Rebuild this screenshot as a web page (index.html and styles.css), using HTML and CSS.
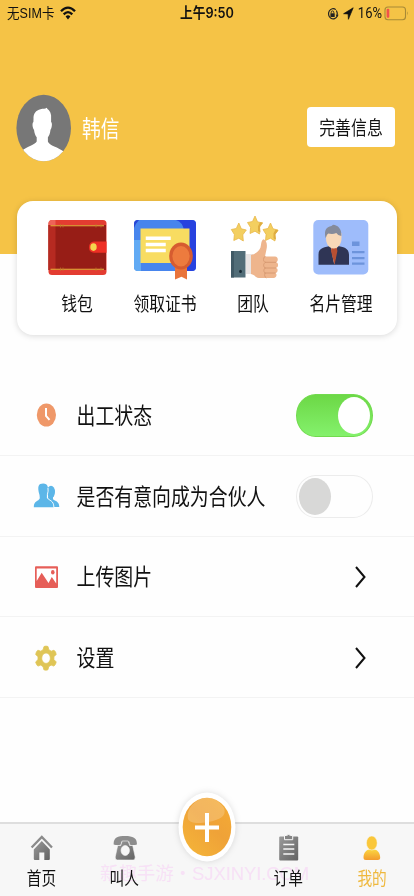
FILE: index.html
```html
<!DOCTYPE html>
<html lang="zh-CN">
<head>
<meta charset="utf-8">
<meta name="viewport" content="width=device-width, initial-scale=1">
<title>我的</title>
<link rel="stylesheet" href="styles.css">
</head>
<body>
<div class="app">
  <header class="hero">
    <div class="status">
      <div class="status-side"><span class="tall carrier">无SIM卡</span>
        <svg class="wifi" width="16" height="14" viewBox="0 0 16 14"><g fill="none" stroke="#111" stroke-width="2.3"><path d="M1 5.2Q8-2 15 5.2"/><path d="M3.7 8.4Q8 4 12.3 8.4"/></g><path d="M5.6 10.4Q8 8.3 10.4 10.4L8 13.5z" fill="#111"/></svg>
      </div>
      <span class="tall clock">上午9:50</span>
      <div class="status-side right">
        <svg width="12" height="14" viewBox="0 0 12 14"><path d="M8.8 2.6A4.6 5.1 0 1 0 10.3 9" fill="none" stroke="#222" stroke-width="1.2"/><path d="M9.4 3.5Q10.8 6 10.1 8.7" fill="none" stroke="#222" stroke-width="1.2"/><path d="M8.7 7.7h3L10.1 10z" fill="#222"/><rect x="3.4" y="6.3" width="4.3" height="3.7" fill="#222"/><path d="M4.2 6.4V5.3a1.3 1.4 0 0 1 2.6 0v1.1" fill="none" stroke="#222" stroke-width=".9"/></svg>
        <svg width="11" height="13" viewBox="0 0 11 13"><path d="M10.200.8L.6 6.700l4.500.2.3 5.400z" fill="#111" stroke="#111" stroke-width=".7" stroke-linejoin="round"/></svg>
        <span class="tall pct">16%</span>
        <svg class="battery" width="26" height="15" viewBox="0 0 26 15"><rect x="1" y="1" width="20.5" height="12.8" rx="3" fill="none" stroke="#a88a36" stroke-width="1.1"/><rect x="2.6" y="2.8" width="2.7" height="9" rx="1" fill="#f1534a"/><path d="M23 5.3q1.7 2.1 0 4.3z" fill="#a88a36"/></svg>
      </div>
    </div>
    <div class="profile">
      <svg width="56" height="68" viewBox="0 0 56 68"><defs><clipPath id="face"><ellipse cx="27.7" cy="34" rx="27.3" ry="33.2"/></clipPath></defs><g clip-path="url(#face)"><path fill="#777" d="M0 0h56v68H0z"/><path fill="#fff" d="M17.5 25c-.3-6 2.500-8.500 7-9.800 3-.9 4.500-.2 6.200-1.500 1 2 4 3 4.400 7.800V28c1.500 1 .8 6-.6 7.800-.5 4-1.400 6-2.600 7.400v4.200c1.500 4.500 10 5 17 11.200V68H5V57c7-5 13.500-6 15.700-9.600v-4.200c-1.300-1.400-2.300-4-2.700-7.400-1.600-2-2-7-.6-7.800z"/></g></svg>
      <span class="tall name">韩信</span>
      <button class="complete"><span class="tall">完善信息</span></button>
    </div>
  </header>

  <section class="card">
    <a class="tile">
      <svg width="64" height="66" viewBox="0 0 64 66"><rect x="3.500" y="4" width="58" height="55" rx="3.500" fill="#e33c31"/><rect x="3.500" y="9" width="57.500" height="45" fill="#971d16"/><path fill="#b62a21" d="M3.500 9h7v45h-7z"/><path fill="#ee6258" d="M3.500 7.500Q3.500 4 7 4h3.500v5h-7z"/><path d="M5.500 9.800H59M5.500 53.300H59" stroke="#edb63d" stroke-width="1.100"/><path d="M15.500 8v3.500M18 8v3.500M51 8v3.500M56 8v3.500M15.500 51.500V55M18 51.500V55M51 51.500V55M56 51.500V55" stroke="#bd7629" stroke-width=".7"/><path fill="#ee2f25" d="M61.500 25.500H49q-5 .5-5 5.700t5 5.600h12.500z"/><ellipse cx="48.500" cy="31.100" rx="3.200" ry="3.800" fill="#f5d44d"/></svg>
      <span class="tall">钱包</span>
    </a>
    <a class="tile">
      <svg width="64" height="66" viewBox="0 0 64 66"><rect x="1" y="4" width="62" height="51" rx="4" fill="#4785ed"/><path d="M43 4h16q4 0 4 4v43q0 4-4 4h-8V15Q50 6 43 4z" fill="#2742df"/><path d="M1 24h7v31H5q-4 0-4-4z" fill="#61aaf4"/><path d="M1 8q0-4 4-4h1Q3 7 1 12z" fill="#2846d5"/><path fill="#f8dc61" d="M7.500 12.500h49V47h-49z"/><path d="M14.500 22.300H36M14.500 28.500H31M14.500 34.500H31" stroke="#fff" stroke-width="3.500" stroke-linecap="square"/><path fill="#e9743b" d="M42 51h12v12.500l-5.500-2.700L42 63.500z"/><ellipse cx="48" cy="40" rx="11.800" ry="13.600" fill="#d65c30"/><ellipse cx="48" cy="40.200" rx="8.600" ry="10.300" fill="#ed7b3e"/></svg>
      <span class="tall">领取证书</span>
    </a>
    <a class="tile">
      <svg width="64" height="66" viewBox="0 0 64 66"><defs><path id="star" d="M0-9L2.500-3.200 7.500-2 4 2.800 4.500 9 0 6.200-5 8.500-4.400 2.500-7.500-2.500-2.500-3.500z"/></defs><g fill="#f3cf60" stroke="#e8b84a" stroke-width=".8" stroke-linejoin="round"><use href="#star" transform="translate(17.800 16)"/><use href="#star" transform="translate(34 9)"/><use href="#star" transform="translate(49.500 16)"/></g><path fill="#dfad41" d="M37 15l2.500 1.600-.5-6 3-4-3-.4-2 4zm15.500 7.300l2.500 1.400-.5-5.500 3-4-3-.4-2 3.500z"/><path fill="#e8e4e4" d="M25 38h7v20h-7z"/><path d="M30 39c5-1 8-4 9.500-7.500.8-3 .5-6.500 2.800-8.200 3.300.6 4.300 5.500 3.200 10L44 40.500h10c3.500 0 3.500 5 1 5.800 3 .5 2.500 5 0 5.600 2.500.6 2 4.800-.5 5.200 2 1.300 1 5-2 5H38c-4-1-5-3.600-8-4z" fill="#eeb58d"/><path d="M55 46.300H44M55 52H43M54.500 57H43" stroke="#d79a72" stroke-width="1"/><path d="M44.500 40.500q-2 0-2 3c0 2 1 2.800 2.300 2.800-2.800 1-2.800 4.700-.3 5.700-2.200 1-2.200 4.200 0 5-1.500 1.500-1 4 .8 5" fill="none" stroke="#d79a72" stroke-width=".9"/><path fill="#526d78" d="M10 35h14.500v26.500H10z"/><path fill="#405965" d="M10 35h3v26.500h-3z"/><ellipse cx="19.500" cy="55.400" rx="1.400" ry="1.700" fill="#172934"/></svg>
      <span class="tall">团队</span>
    </a>
    <a class="tile">
      <svg width="64" height="66" viewBox="0 0 64 66"><rect x="4.300" y="4" width="55" height="54.500" rx="5" fill="#9ebcfb"/><path d="M9.500 48.800V38.500c0-7 7-7.500 12.500-8.700h6c6 1.200 12 2 12 9v10z" fill="#2f3555"/><path d="M21.500 29h7l-3.300 19.500z" fill="#dfe1ea"/><path d="M22.600 31.500h5l.8 3.500-2.900 13.800L22 35z" fill="#b85032"/><path d="M17 17h15.500v5c0 6-3 10-7.800 10.500C19.500 32 17 28 17 22z" fill="#f7d8b8"/><path d="M16.500 22C15 14 17 11 22.500 10l1.500-1.300C29 9 33 13 32.300 20q-3 0-5-3c-3 1.500-6 1-8 .5-2 1-1.300 3-2.800 4.500z" fill="#858b9b"/><path fill="#6d94dc" d="M43 25.500h7.500V30H43zM43 35h12.500v2.200H43zM43 41h12.500v2.200H43zM43 46.500h12.500v2.200H43z"/></svg>
      <span class="tall">名片管理</span>
    </a>
  </section>

  <main class="list">
    <div class="row">
      <svg width="28" height="30" viewBox="0 0 28 30"><ellipse cx="14.400" cy="15" rx="9.600" ry="11.600" fill="#ef9869"/><path d="M14 8v7.800l3.500 4" fill="none" stroke="#fff" stroke-width="2"/></svg>
      <span class="tall label">出工状态</span><i class="switch on"></i>
    </div>
    <div class="row">
      <svg width="28" height="30" viewBox="0 0 28 30"><g fill="#5cb6e8"><ellipse cx="19" cy="11" rx="4" ry="6.200"/><path d="M17 14h4v4c1 2 6.300 1.500 6.300 8H12z"/><path d="M7.500 14C5 5 6.500 2.500 11.200 2.500S17 6 15 13.500v3.500c1.500 3.500 6.700 2 6.700 9.200H1.800c0-7 4.700-5.500 6-9z"/></g><path d="M16 7q.5 3-.6 6.500v3.300c1.500 3 6.300 2.200 6.500 9.400" fill="none" stroke="#fff" stroke-width=".9"/></svg>
      <span class="tall label">是否有意向成为合伙人</span><i class="switch"></i>
    </div>
    <div class="row">
      <svg width="28" height="30" viewBox="0 0 28 30"><rect x="3" y="4.300" width="23" height="21.700" rx="1" fill="#e65e58"/><path d="M4.700 6.500h19.500v15l-4.400-6.500-3.300 6-6.800-10.200-5 8.200z" fill="#fff"/><ellipse cx="20.800" cy="10.200" rx="1.800" ry="2.200" fill="#e65e58"/></svg>
      <span class="tall label">上传图片</span>
      <svg class="arrow" width="14" height="24" viewBox="0 0 14 24"><path d="M2 2l8.500 10L2 22" fill="none" stroke="#111" stroke-width="2"/></svg>
    </div>
    <div class="row">
      <svg width="28" height="30" viewBox="0 0 28 30"><path fill="#dfc556" stroke="#dfc556" stroke-width=".8" stroke-linejoin="round" fill-rule="evenodd" d="M12 3.500q2-.8 4 0l.8 3.200 2.400 1.500 2.800-1q2 1.600 2.200 4.200l-2.300 2.400v2.800l2.300 2.300q-.4 2.800-2.300 4.200l-2.800-1-2.400 1.600-.8 3.100q-2 .8-4 0l-.8-3.100-2.300-1.600-2.900 1q-1.800-1.500-2.200-4.200L6 16.600v-2.800l-2.300-2.400q.3-2.700 2.200-4.200l2.900 1 2.300-1.500zM14 10a4.300 5.200 0 1 0 .1 0z"/></svg>
      <span class="tall label">设置</span>
      <svg class="arrow" width="14" height="24" viewBox="0 0 14 24"><path d="M2 2l8.500 10L2 22" fill="none" stroke="#111" stroke-width="2"/></svg>
    </div>
  </main>

  <nav class="tabs">
    <span class="watermark">新趣手游・SJXINYI.COM</span>
    <svg class="defs" width="0" height="0"><defs><linearGradient id="gray" x1="0" y1="0" x2="1" y2="1"><stop stop-color="#9b9b9b"/><stop offset="1" stop-color="#626262"/></linearGradient><linearGradient id="gold" x1="0" y1="0" x2="0" y2="1"><stop stop-color="#fbd641"/><stop offset="1" stop-color="#f39b2d"/></linearGradient></defs></svg>
    <a class="tab"><svg width="26" height="28" viewBox="-.8 0 26 28"><path d="M2.800 14.500L13 4l10.200 10.500" fill="none" stroke="#8b8b8b" stroke-width="2.300"/><path fill="url(#gray)" d="M13 8l8 8.500V26q0 1-1 1h-4.500v-7.500h-5V27H6q-1 0-1-1v-9.500z"/></svg><span class="tall">首页</span></a>
    <a class="tab"><svg width="26" height="28" viewBox="-1.200 0 26 28"><path fill="#8d8d8d" d="M1.500 11.500C1 5 5 3 13 3s12 2 11.700 8.500q-3.700 1-7.500 0V8.800H9v2.700q-3.800 1-7.500 0z"/><path fill="url(#gray)" fill-rule="evenodd" d="M10 8h6l1.500 4.500h3L23 24q0 3-2 3H5q-2 0-2-3l2.500-11.500h3zM13 12.500a4.200 5 0 1 0 .1 0z" stroke="#f7f7f7" stroke-width=".6"/></svg><span class="tall">叫人</span></a>
    <a class="tab add"><svg width="62" height="74" viewBox="0 0 62 74"><ellipse cx="31" cy="36" rx="28.500" ry="34.500" fill="#fff"/><ellipse cx="31" cy="36" rx="24.300" ry="29.300" fill="url(#ball)"/><defs><linearGradient id="ball" x1="1" y1="0" x2=".2" y2="1"><stop stop-color="#f5ac34"/><stop offset=".5" stop-color="#efa238"/><stop offset="1" stop-color="#f4b339"/></linearGradient></defs><path d="M14 17C23 4 39 3 48 17c3 8-4 12-16 14-11 2-18 1-20-3-1-4 0-8 2-11z" fill="#fff" opacity=".2"/><path d="M31 22v29M19 36.500h24" stroke="#fff" stroke-width="4"/></svg></a>
    <a class="tab order"><svg width="26" height="28" viewBox="0 0 26 28"><rect x="4.200" y="3.500" width="19" height="24" rx="1" fill="url(#gray)"/><path fill="#858585" stroke="#f7f7f7" stroke-width="1" d="M9.500 2.500h2Q13.500.5 15.700 2.500h2v4.200H9.500z"/><path d="M8.300 11.500h11M8.300 16h11M8.300 21h11" stroke="#f7f7f7" stroke-width="1.500"/></svg><span class="tall">订单</span></a>
    <a class="tab active"><svg width="26" height="28" viewBox="0 0 26 28"><path d="M4.500 24.500c0-5 3.200-8 6-8h4.500c3 0 6.200 3 6.200 8 0 1.700-.8 2.500-2.300 2.500h-12c-1.600 0-2.400-.8-2.400-2.500z" fill="url(#gold)"/><ellipse cx="12.800" cy="10" rx="5.400" ry="7" fill="#fac73b" stroke="#f7f7f7" stroke-width=".5"/></svg><span class="tall">我的</span></a>
  </nav>
</div>
</body>
</html>
```
FILE: styles.css
```css
* { box-sizing: border-box; }
body { margin: 0; background: #fefefe; color: #111; font-family: "Liberation Sans", "Noto Sans CJK SC", sans-serif; }
svg { display: block; flex: none; }
.app { height: 896px; width: 414px; display: flex; flex-direction: column; overflow: hidden; }
.tall { display: block; white-space: nowrap; line-height: 20px; transform: scaleY(1.2); }

.hero { height: 254px; flex: none; background: #f5c346; }
.status { height: 27px; padding: 0 4px 0 7px; display: grid; grid-template-columns: 1fr auto 1fr; align-items: center; }
.status-side { display: flex; align-items: center; gap: 5px; }
.status-side.right { justify-content: flex-end; gap: 4px; }
.carrier { font-size: 12.500px; letter-spacing: .1px; transform: scaleY(1.1); }
.wifi { margin-top: -2px; }
.clock { margin-right: 3px; font-family: Inter, "Noto Sans CJK SC", sans-serif; font-size: 12.700px; font-weight: 600; transform: scaleY(1.12); }
.pct { font-family: Roboto, sans-serif; font-size: 13px; transform: scaleY(1.1); }
.battery { margin-left: -2px; }

.profile { margin-top: 67px; height: 68px; padding: 0 19px 0 16px; display: flex; align-items: center; }
.name { margin: 4px 0 0 10px; font-size: 18.700px; color: #fff; }
.complete { margin: -2px 0 0 auto; width: 88px; height: 40px; padding: 1px 0 0; border: 0; border-radius: 4px; background: #fff; color: #111; font: 15.900px "Noto Sans CJK SC", sans-serif; }

.card { flex: none; width: 380px; height: 134px; margin: -53px auto 0 17px; padding: 15px 24px 0 28px; border-radius: 16px; background: #fff; box-shadow: 0 1px 6px rgba(0,0,0,.15); display: grid; grid-template-columns: repeat(4, 1fr); gap: 24px; }
.tile { width: 64px; display: flex; flex-direction: column; align-items: center; gap: 13px; font-size: 15.800px; }

.list { margin-top: 40px; }
.row { height: 80.750px; padding: 1px 41px 0 32px; display: flex; align-items: center; border-bottom: 1px solid #f3f3f3; }
.label { margin: 3px 0 0 16.500px; font-size: 18.900px; }
.switch { width: 77px; height: 43px; margin-left: auto; padding: 2px; border: 1px solid #ececec; border-radius: 20px/22px; display: flex; }
.switch::after { content: ""; width: 32px; height: 37px; border-radius: 50%; background: #d8d8d7; }
.switch.on { justify-content: flex-end; border-color: #72db4e; background: linear-gradient(#6cd846, #84f16c); }
.switch.on::after { background: #fff; }
.arrow { margin: 1px 5px 0 auto; }

.tabs { position: relative; height: 74px; margin-top: auto; border-top: 2px solid #dedede; background: #f7f7f7; display: grid; grid-template-columns: repeat(5, 1fr); }
.defs { position: absolute; }
.tab { position: relative; display: flex; flex-direction: column; align-items: center; gap: 8px; padding-top: 9px; font-size: 14.700px; }
.order { padding-right: 3px; }
.active { padding-right: 1px; color: #efb83d; }
.add { padding: 0; }
.add svg { margin-top: -33px; filter: drop-shadow(0 0 3px rgba(0,0,0,.13)); }
.watermark { position: absolute; left: 100px; top: 38px; white-space: nowrap; line-height: 24px; font-size: 18.500px; letter-spacing: -.1px; color: rgba(248,190,246,.4); pointer-events: none; }
```
